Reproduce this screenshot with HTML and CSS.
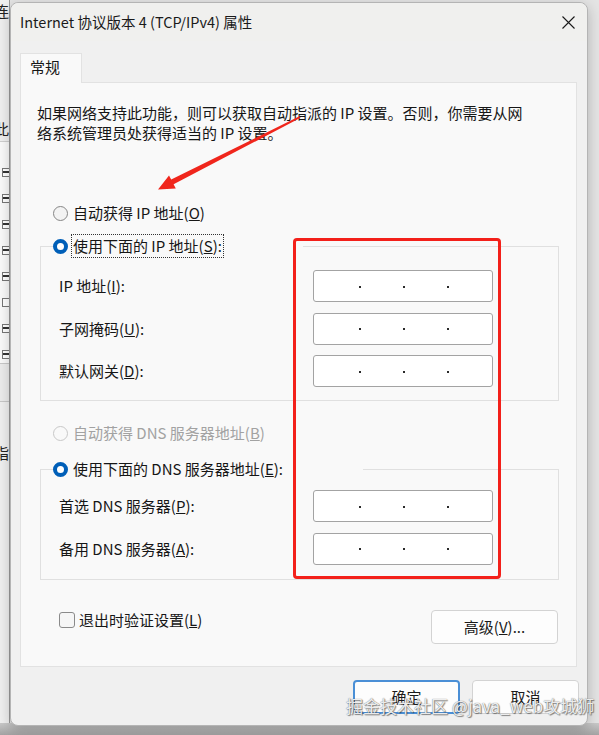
FILE: index.html
```html
<!DOCTYPE html>
<html lang="zh-CN">
<head>
<meta charset="utf-8">
<title>Internet 协议版本 4 (TCP/IPv4) 属性</title>
<link rel="stylesheet" href="styles.css">
</head>
<body>
  <div class="bgwin">
    <div class="bg-top"><span class="bg-char">连</span></div>
    <div class="bg-head"><span class="bg-char">此</span></div>
    <div class="bg-list">
      <span class="bg-cb on"></span>
      <span class="bg-cb on"></span>
      <span class="bg-cb on"></span>
      <span class="bg-cb on"></span>
      <span class="bg-cb on"></span>
      <span class="bg-cb"></span>
      <span class="bg-cb on"></span>
      <span class="bg-cb on"></span>
    </div>
    <div class="bg-gap"></div>
    <div class="bg-bottom"><span class="bg-char">指</span></div>
  </div>
  <div class="taskbar"></div>

  <section class="dialog">
    <header class="titlebar">
      <span class="title">Internet 协议版本 4 (TCP/IPv4) 属性</span>
      <svg class="close" width="13" height="13" viewBox="0 0 13 13"><path d="M0.5 0.5 L12.5 12.5 M12.5 0.5 L0.5 12.5" stroke="#1a1a1a" stroke-width="1.1" fill="none"/></svg>
    </header>

    <div class="tabs"><div class="tab">常规</div></div>

    <div class="panel">
      <p class="intro">如果网络支持此功能，则可以获取自动指派的 IP 设置。否则，你需要从网<br>络系统管理员处获得适当的 IP 设置。</p>

      <div class="option option-first"><span class="radio"></span><span class="opt-label">自动获得 IP 地址(<u>O</u>)</span></div>

      <fieldset class="group">
        <legend class="legend legend-ip"><span class="radio checked"></span><span class="opt-label focus">使用下面的 IP 地址(<u>S</u>):</span></legend>
        <div class="fields fields-ip">
          <span class="field-label">IP 地址(<u>I</u>):</span>
          <div class="ipbox"><i></i><i></i><i></i></div>
          <span class="field-label">子网掩码(<u>U</u>):</span>
          <div class="ipbox"><i></i><i></i><i></i></div>
          <span class="field-label">默认网关(<u>D</u>):</span>
          <div class="ipbox"><i></i><i></i><i></i></div>
        </div>
      </fieldset>

      <div class="option option-dns disabled"><span class="radio off"></span><span class="opt-label">自动获得 DNS 服务器地址(<u>B</u>)</span></div>

      <fieldset class="group group-dns">
        <legend class="legend legend-dns"><span class="radio checked"></span><span class="opt-label">使用下面的 DNS 服务器地址(<u>E</u>):</span></legend>
        <div class="fields fields-dns">
          <span class="field-label">首选 DNS 服务器(<u>P</u>):</span>
          <div class="ipbox"><i></i><i></i><i></i></div>
          <span class="field-label">备用 DNS 服务器(<u>A</u>):</span>
          <div class="ipbox"><i></i><i></i><i></i></div>
        </div>
      </fieldset>

      <div class="bottom-row">
        <div class="check-row"><span class="checkbox"></span><span class="check-label">退出时验证设置(<u>L</u>)</span></div>
        <button class="btn btn-adv">高级(<u>V</u>)...</button>
      </div>
    </div>

    <footer class="footer">
      <button class="btn btn-ok">确定</button>
      <button class="btn">取消</button>
    </footer>
  </section>

  <div class="highlight"></div>
  <svg class="arrow" width="160" height="95" viewBox="0 0 160 95">
    <polygon points="149.4,11.2 150.6,12.8 23.6,79.2 25.8,83.4 8,84.5 19,70.4 21.2,74.6" fill="#f0261c"/>
  </svg>
  <div class="watermark">掘金技术社区 @java_web攻城狮</div>
</body>
</html>
```

FILE: styles.css
```css
* { box-sizing: border-box; }

html, body {
  margin: 0;
  padding: 0;
}

body {
  width: 599px;
  height: 735px;
  overflow: hidden;
  position: relative;
  background: #e4e4e4;
  font-family: "Noto Sans CJK SC", "Noto Sans", sans-serif;
  color: #161616;
}

/* ---------- background window sliver ---------- */
.bgwin {
  position: absolute;
  left: 0;
  top: 0;
  width: 10px;
  height: 735px;
  overflow: hidden;
  background: #f0f0f0;
  border-right: 1px solid #9a9a9a;
  display: flex;
  flex-direction: column;
}

.bg-char {
  font-size: 15px;
  line-height: 18px;
  color: #222;
  white-space: nowrap;
}

.bg-top {
  height: 120px;
  display: flex;
  justify-content: flex-end;
  padding-top: 2px;
}

.bg-head {
  height: 22px;
  display: flex;
  justify-content: flex-end;
  border-bottom: 1px solid #cfcfcf;
}

.bg-list {
  height: 222px;
  background: #fafafa;
  border-bottom: 1px solid #c8c8c8;
  display: flex;
  flex-direction: column;
  align-items: flex-end;
  padding-top: 26px;
  gap: 17px;
}

.bg-cb {
  width: 7px;
  height: 9px;
  border: 1px solid #777;
  border-right: none;
  background: #fff;
}

.bg-cb.on {
  background: linear-gradient(#fff 35%, #333 35%, #333 60%, #fff 60%);
}

.bg-gap {
  height: 38px;
  background: #ececec;
  border-bottom: 1px solid #c8c8c8;
}

.bg-bottom {
  height: 80px;
  display: flex;
  justify-content: flex-end;
  align-items: flex-end;
  padding-bottom: 20px;
}

.taskbar {
  position: absolute;
  left: 0;
  right: 0;
  bottom: 0;
  height: 12px;
  background: linear-gradient(#c9c9c9, #a3a3a3);
}

/* ---------- dialog ---------- */
.dialog {
  position: absolute;
  left: 10px;
  top: 2px;
  width: 578px;
  background: #f0f0f0;
  border: 1px solid #b4b4b4;
  border-radius: 8px;
  box-shadow: 0 4px 14px rgba(0, 0, 0, 0.22);
  display: flex;
  flex-direction: column;
}

.titlebar {
  height: 38px;
  display: flex;
  align-items: center;
  justify-content: space-between;
  padding: 0 12px 0 9px;
  background: #f0f0ee;
  border-radius: 8px 8px 0 0;
}

.title {
  font-size: 14.5px;
  line-height: 20px;
  color: #1a1a1a;
}

.close {
  display: block;
  margin-top: 1px;
}

.tabs {
  display: flex;
  margin: 12px 0 -1px 9px;
}

.tab {
  position: relative;
  z-index: 1;
  width: 62px;
  height: 30px;
  background: #f9f9f9;
  border: 1px solid #e2e2e2;
  border-bottom: none;
  font-size: 15px;
  line-height: 26px;
  padding-left: 9px;
}

.panel {
  margin: 0 10px 0 9px;
  background: #f9f9f9;
  border: 1px solid #e2e2e2;
  display: flex;
  flex-direction: column;
  padding-bottom: 22px;
}

.intro {
  margin: 20px 0 0 16px;
  font-size: 15px;
  line-height: 20px;
}

.option {
  display: flex;
  align-items: center;
  margin-left: 32px;
  font-size: 15px;
}

.option-first { margin-top: 58px; }
.option-dns { margin-top: 20px; }

.opt-label {
  line-height: 18px;
  padding: 2px 1px;
  border: 1px solid transparent;
  margin-left: 3px;
  white-space: nowrap;
}

.opt-label.focus {
  border: 1px dotted #333;
}

.disabled .opt-label { color: #a2a2a2; }

.radio {
  flex: none;
  width: 15px;
  height: 15px;
  border-radius: 50%;
  border: 1px solid #868686;
  background: #f3f3f3;
}

.radio.checked {
  border: 4.5px solid #005fb8;
  background: #fff;
}

.radio.off {
  border-color: #c8c8c8;
  background: #f9f9f9;
}

.group {
  margin: 9px 17px 0 19px;
  padding: 0 0 13px 0;
  border: 1px solid #e0e0e0;
  min-width: 0;
}

.group-dns {
  margin-top: 12px;
  padding-bottom: 14px;
}

.legend {
  display: flex;
  align-items: center;
  padding: 0;
  margin-left: 12px;
  font-size: 15px;
}

.legend-ip { width: 250px; }
.legend-dns { width: 310px; }

.fields {
  display: grid;
  grid-template-columns: 254px 180px;
  row-gap: 10.5px;
  align-items: center;
  padding-left: 18px;
}

.fields-ip { margin-top: 12px; }
.fields-dns { margin-top: 9px; }

.field-label {
  font-size: 15px;
  line-height: 20px;
  white-space: nowrap;
}

.ipbox {
  height: 32px;
  background: #fff;
  border: 1px solid #a3a3a3;
  border-radius: 3px;
  display: flex;
  align-items: center;
  gap: 42px;
  padding-left: 45px;
}

.ipbox i {
  width: 2px;
  height: 2px;
  background: #2a2a2a;
  margin-top: 1px;
}

.bottom-row {
  display: flex;
  justify-content: space-between;
  align-items: flex-start;
  margin: 30px 18px 0 38px;
}

.check-row {
  display: flex;
  align-items: center;
  height: 20px;
}

.checkbox {
  width: 16px;
  height: 16px;
  border: 1px solid #8a8a8a;
  border-radius: 3px;
  background: #f6f6f6;
}

.check-label {
  font-size: 15px;
  line-height: 20px;
  margin-left: 4px;
}

.btn {
  font-family: inherit;
  font-size: 15px;
  color: #1b1b1b;
  height: 34px;
  width: 107px;
  background: #fdfdfd;
  border: 1px solid #d3d3d3;
  border-radius: 4px;
  padding: 0;
}

.btn-adv { width: 127px; }

.btn-ok {
  border: 2px solid #4a8fd6;
}

.footer {
  display: flex;
  justify-content: flex-end;
  gap: 12px;
  margin-top: 13px;
  padding: 0 8px 11px 0;
}

/* ---------- annotations ---------- */
.highlight {
  position: absolute;
  left: 293px;
  top: 238px;
  width: 208px;
  height: 341px;
  border: 3px solid #f3201a;
  border-radius: 4px;
}

.arrow {
  position: absolute;
  left: 150px;
  top: 105px;
}

.watermark {
  position: absolute;
  left: 346px;
  top: 694px;
  font-size: 17px;
  line-height: 24px;
  white-space: nowrap;
  color: rgba(255, 255, 255, 0.9);
  text-shadow: 0 0 1px #555, 1px 1px 1px rgba(0, 0, 0, 0.45);
}
```
